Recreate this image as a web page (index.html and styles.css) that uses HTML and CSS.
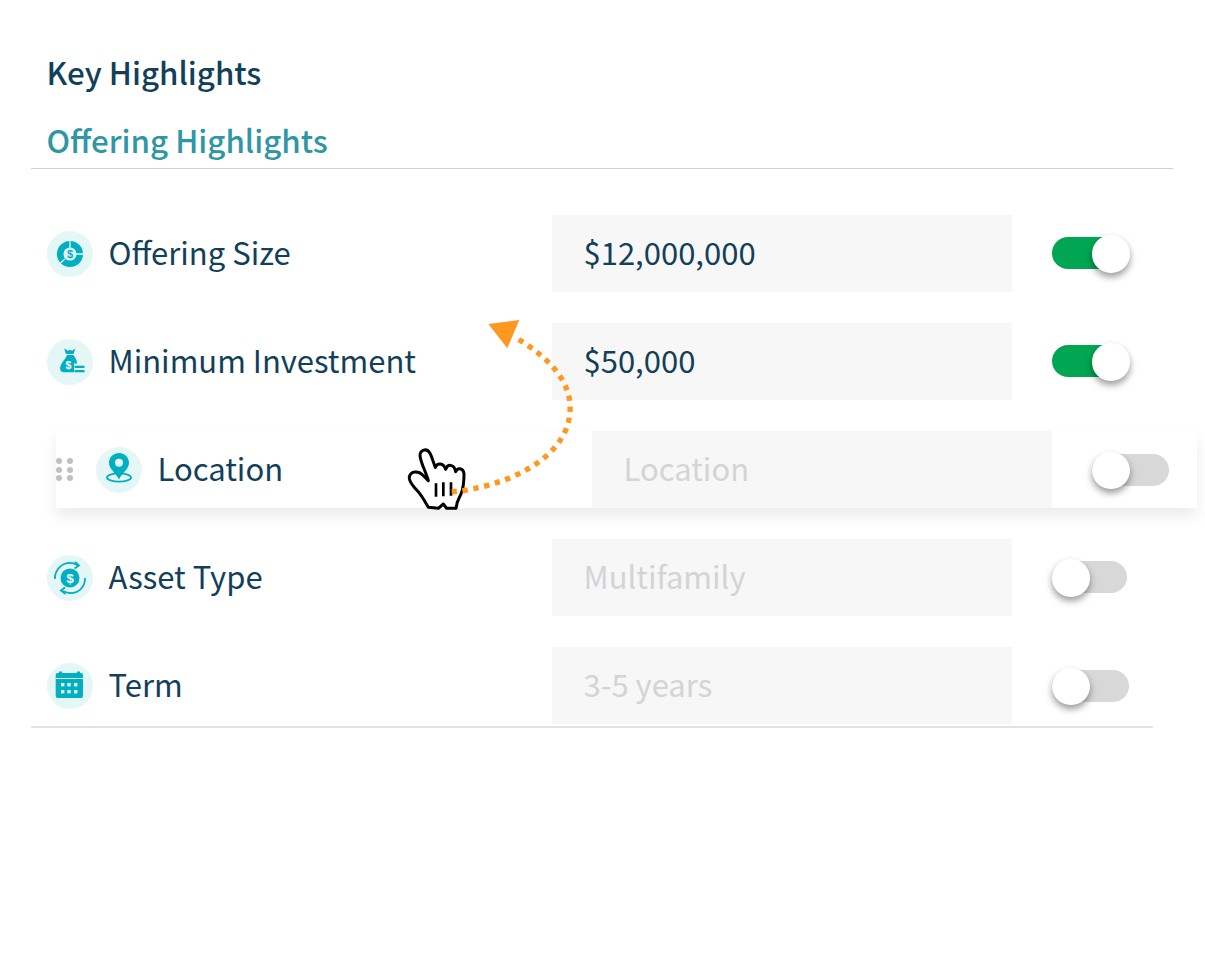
FILE: index.html
```html
<!DOCTYPE html>
<html lang="en">
<head>
<meta charset="utf-8">
<title>Key Highlights</title>
<link rel="stylesheet" href="styles.css">
</head>
<body>
<main class="page">
  <h1 class="title">Key Highlights</h1>
  <h2 class="subtitle">Offering Highlights</h2>
  <div class="rows">
    <div class="row">
      <div class="label-col">
        <svg class="icon" viewBox="0 0 46 46"><circle class="disc" cx="23" cy="23" r="23"/><circle class="ring" cx="23" cy="23" r="9.800"/><path class="gap" d="M23 8v9M29 23h9M18 28l-7 6"/><text class="sym" x="23" y="27" text-anchor="middle">$</text></svg>
        <span class="label">Offering Size</span>
      </div>
      <div class="field"><span class="value">$12,000,000</span></div>
      <div class="toggle on"><span class="knob"></span></div>
    </div>
    <div class="row">
      <div class="label-col">
        <svg class="icon" viewBox="0 0 46 46"><circle class="disc" cx="23" cy="23" r="23"/><path class="fill" d="M17 9.500l4 2.300 2-1 2 1 3.500-2.300-2 5.500h-7.500zM20 16h6.500c1.500 3 3.500 4.500 3.500 8.500H27V33.300H17c-3.500 0-4.500-3-3.500-6 1-4 5-7 6.500-11.300z"/><rect class="fill" x="27.500" y="26.700" width="10" height="2.300"/><rect class="fill" x="27.500" y="31" width="10" height="2.300"/><text class="sym-white small" x="21.500" y="30" text-anchor="middle">$</text></svg>
        <span class="label">Minimum Investment</span>
      </div>
      <div class="field"><span class="value">$50,000</span></div>
      <div class="toggle on"><span class="knob"></span></div>
    </div>
    <div class="row dragged">
      <div class="grip"><i></i><i></i><i></i><i></i><i></i><i></i></div>
      <div class="label-col">
        <svg class="icon" viewBox="0 0 46 46"><circle class="disc" cx="23" cy="23" r="23"/><ellipse class="line" cx="23" cy="30.500" rx="12" ry="4.200"/><path class="fill" d="M23 6c-5.500 0-10 4.300-10 9.800 0 6 6.500 10 10 16.500 3.500-6.500 10-10.500 10-16.500C33 10.300 28.500 6 23 6z"/><circle class="hole" cx="23" cy="15.700" r="4"/></svg>
        <span class="label">Location</span>
      </div>
      <div class="field muted"><span class="value">Location</span></div>
      <div class="toggle wide"><span class="knob"></span></div>
    </div>
    <div class="row">
      <div class="label-col">
        <svg class="icon" viewBox="0 0 46 46"><circle class="disc" cx="23" cy="23" r="23"/><circle class="fill" cx="23" cy="23" r="9.500"/><path class="line" d="M8 24C7.500 15 15 7.500 24 8c2.500 0 5 1 7 2.500M38 23c.5 9-7 15.500-15 15-2.500 0-5-1-7-2"/><path class="line" d="M28 7l4 3.500-4.500 3M18 32.500l-4 3 4.500 3.500"/><text class="sym-white" x="23" y="27.800" text-anchor="middle">$</text></svg>
        <span class="label">Asset Type</span>
      </div>
      <div class="field muted"><span class="value">Multifamily</span></div>
      <div class="toggle"><span class="knob"></span></div>
    </div>
    <div class="row">
      <div class="label-col">
        <svg class="icon" viewBox="0 0 46 46"><circle class="disc" cx="23" cy="23" r="23"/><rect class="fill" x="8.700" y="10" width="27.300" height="25" rx="2"/><rect class="fill" x="12" y="8.500" width="3" height="3"/><rect class="fill" x="30" y="8.500" width="3" height="3"/><path class="rule" d="M8.700 15.500h27.300"/><g class="cells"><rect x="14" y="20" width="3.400" height="3.400"/><rect x="20.300" y="20" width="3.400" height="3.400"/><rect x="27" y="20" width="3.400" height="3.400"/><rect x="14" y="27" width="3.400" height="3.400"/><rect x="20.300" y="27" width="3.400" height="3.400"/><rect x="27" y="27" width="3.400" height="3.400"/></g></svg>
        <span class="label">Term</span>
      </div>
      <div class="field muted"><span class="value">3-5 years</span></div>
      <div class="toggle wide"><span class="knob"></span></div>
    </div>
  </div>
  <svg class="gesture" viewBox="0 0 570 630">
    <path class="hand" d="M85 592C75 575 65 555 50 540 40 528 25 515 28 500 33 483 55 482 68 495L85 512C78 485 62 460 60 437 60 420 80 412 90 430 97 443 100 458 106 472 112 458 130 458 137 478 142 462 162 460 167 485 172 472 190 472 192 492 192 515 190 535 183 552 178 565 170 572 168 595H140L130 582 115 595Z"/>
    <path class="finger" d="M108 520v40M130 517v42M153 517v40"/>
    <path class="dots" d="M155 545C300 535 520 450 510 283 505 195 420 125 345 82"/>
    <path class="head" d="M265 42L358 30 322 115Z"/>
  </svg>
</main>
</body>
</html>
```
FILE: styles.css
```css
* { box-sizing: border-box; }
html, body { margin: 0; padding: 0; background: #fff; }
body { font-family: "Noto Sans CJK SC", "Noto Sans", sans-serif; color: #123f5a; }
.page { position: relative; width: 1205px; height: 959px; padding: 52px 32px 0 31px; overflow: hidden; }
.title { margin: 0 0 0 15.500px; font-size: 31.300px; font-weight: 500; line-height: 40px; color: #123f5a; }
.subtitle { margin: 28px 0 0; padding: 0 0 8px 15.500px; font-size: 31.300px; font-weight: 500; line-height: 40px; color: #2f96a3; border-bottom: 1px solid #d0d0d0; }
.rows { width: 1122px; padding-top: 46px; padding-bottom: 2px; border-bottom: 2px solid #e2e2e2; display: flex; flex-direction: column; gap: 31px; }
.row { display: flex; align-items: center; height: 77px; padding-left: 16px; }
.label-col { width: 505px; display: flex; align-items: center; gap: 15.500px; flex: none; }
.dragged .label-col { width: 496px; }
.icon { width: 46px; height: 46px; flex: none; }
.label, .value { font-size: 31px; line-height: 40px; position: relative; top: -1.500px; }
.field { width: 460px; height: 77px; flex: none; display: flex; align-items: center; padding-left: 31.500px; background: #f7f7f7; }
.field.muted { color: #d4d4d4; }
.toggle { position: relative; flex: none; width: 75px; height: 32px; margin: 0 0 1px 40px; border-radius: 16px; background: #d8d8d8; }
.toggle.wide { width: 77px; margin: 1px 0 0 40px; }
.toggle.on { background: #00a651; }
.knob { position: absolute; left: 0; top: -2px; width: 37.500px; height: 37.500px; border-radius: 50%; background: #fff; box-shadow: 0 4px 7px rgba(0,0,0,.4); }
.toggle.wide .knob { top: -2.500px; }
.toggle.on .knob { left: 40px; }
.dragged { width: 1141px; margin-left: 25px; padding-left: 0; background: #fff; box-shadow: 0 8px 14px rgba(0,0,0,.08); }
.grip { width: 40px; height: 23px; flex: none; display: grid; grid-template-columns: 6px 6px; grid-auto-rows: 6px; column-gap: 5px; row-gap: 2.500px; align-content: center; }
.grip i { width: 6px; height: 6px; border-radius: 50%; background: #c0c0c0; }
.disc { fill: #e5f6f7; }
.fill { fill: #00afc0; }
.ring { fill: none; stroke: #00afc0; stroke-width: 6.500; }
.gap { fill: none; stroke: #e5f6f7; stroke-width: 1.300; }
.line { fill: none; stroke: #00afc0; stroke-width: 1.800; }
.hole { fill: #e5f6f7; }
.rule { stroke: #e5f6f7; stroke-width: 1; }
.cells rect { fill: #e5f6f7; }
.sym { font-size: 11px; font-weight: 700; fill: #00afc0; font-family: "Liberation Sans", sans-serif; }
.sym-white { font-size: 13px; font-weight: 700; fill: #fff; font-family: "Liberation Sans", sans-serif; }
.sym-white.small { font-size: 10.500px; }
.gesture { position: absolute; left: 400px; top: 310px; width: 190px; height: 210px; }
.hand { fill: #fff; stroke: #000; stroke-width: 9; stroke-linejoin: round; }
.finger { fill: none; stroke: #000; stroke-width: 8; }
.dots { fill: none; stroke: #ff9820; stroke-width: 16; stroke-dasharray: 16 17; }
.head { fill: #ff9820; }
```
